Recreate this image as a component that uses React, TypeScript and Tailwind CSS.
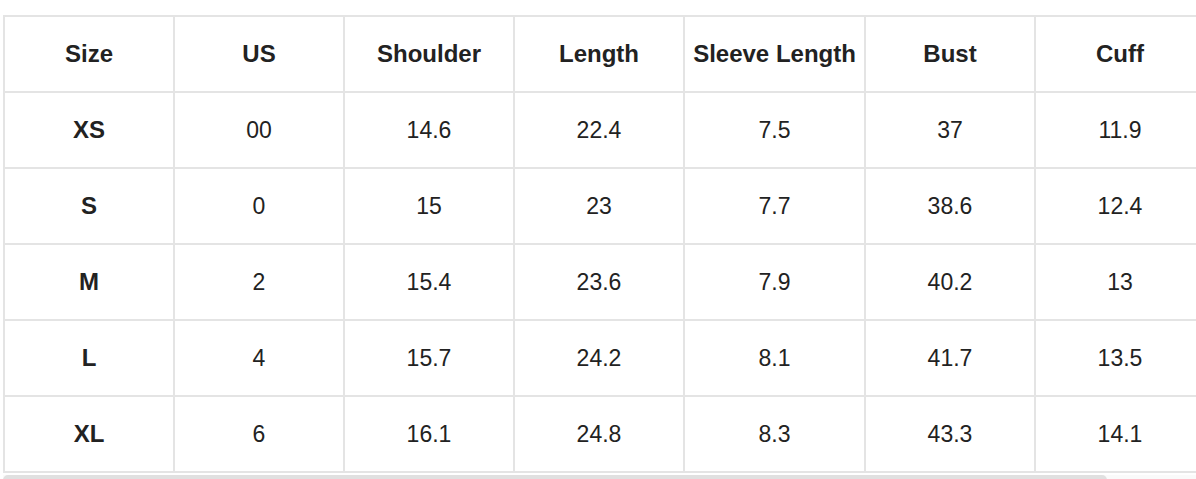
import React from "react";

const headers = ["Size", "US", "Shoulder", "Length", "Sleeve Length", "Bust", "Cuff"];

const rows = [
  ["XS", "00", "14.6", "22.4", "7.5", "37", "11.9"],
  ["S", "0", "15", "23", "7.7", "38.6", "12.4"],
  ["M", "2", "15.4", "23.6", "7.9", "40.2", "13"],
  ["L", "4", "15.7", "24.2", "8.1", "41.7", "13.5"],
  ["XL", "6", "16.1", "24.8", "8.3", "43.3", "14.1"],
];

const widths = ["w-[170px]", "w-[170px]", "w-[170px]", "w-[170px]", "w-[181px]", "w-[170px]", "w-[255px]"];

export default function App() {
  return (
    <div className="h-[479px] w-full overflow-hidden bg-white font-['Liberation_Sans',Arial,sans-serif] text-[#222]">
      <div className="w-[1400px] pl-[3px] pt-[15px]">
        <table className="w-[1286px] table-fixed border-collapse">
          <colgroup>
            {widths.map((w, i) => (
              <col key={i} className={w} />
            ))}
          </colgroup>
          <thead>
            <tr className="h-[76px]">
              {headers.map((h, i) => (
                <th
                  key={h}
                  className={`border-2 border-[#e4e4e4] p-0 text-center text-[24px] font-bold leading-none ${
                    i === 6 ? "pr-[85px]" : ""
                  }`}
                >
                  {h}
                </th>
              ))}
            </tr>
          </thead>
          <tbody>
            {rows.map((row) => (
              <tr key={row[0]} className="h-[76px]">
                {row.map((cell, i) => (
                  <td
                    key={i}
                    className={`border-2 border-[#e4e4e4] p-0 text-center leading-none ${
                      i === 0 ? "text-[24px] font-bold" : "text-[23px] font-normal"
                    } ${i === 6 ? "pr-[85px]" : ""}`}
                  >
                    {cell}
                  </td>
                ))}
              </tr>
            ))}
          </tbody>
        </table>
      </div>

      {/* horizontal scrollbar */}
      <div className="mt-[2px] ml-[3px] h-[10px] bg-[#fafafa]">
        <div className="h-full w-[1104px] rounded-full bg-[#e0e0e0]" />
      </div>
    </div>
  );
}
